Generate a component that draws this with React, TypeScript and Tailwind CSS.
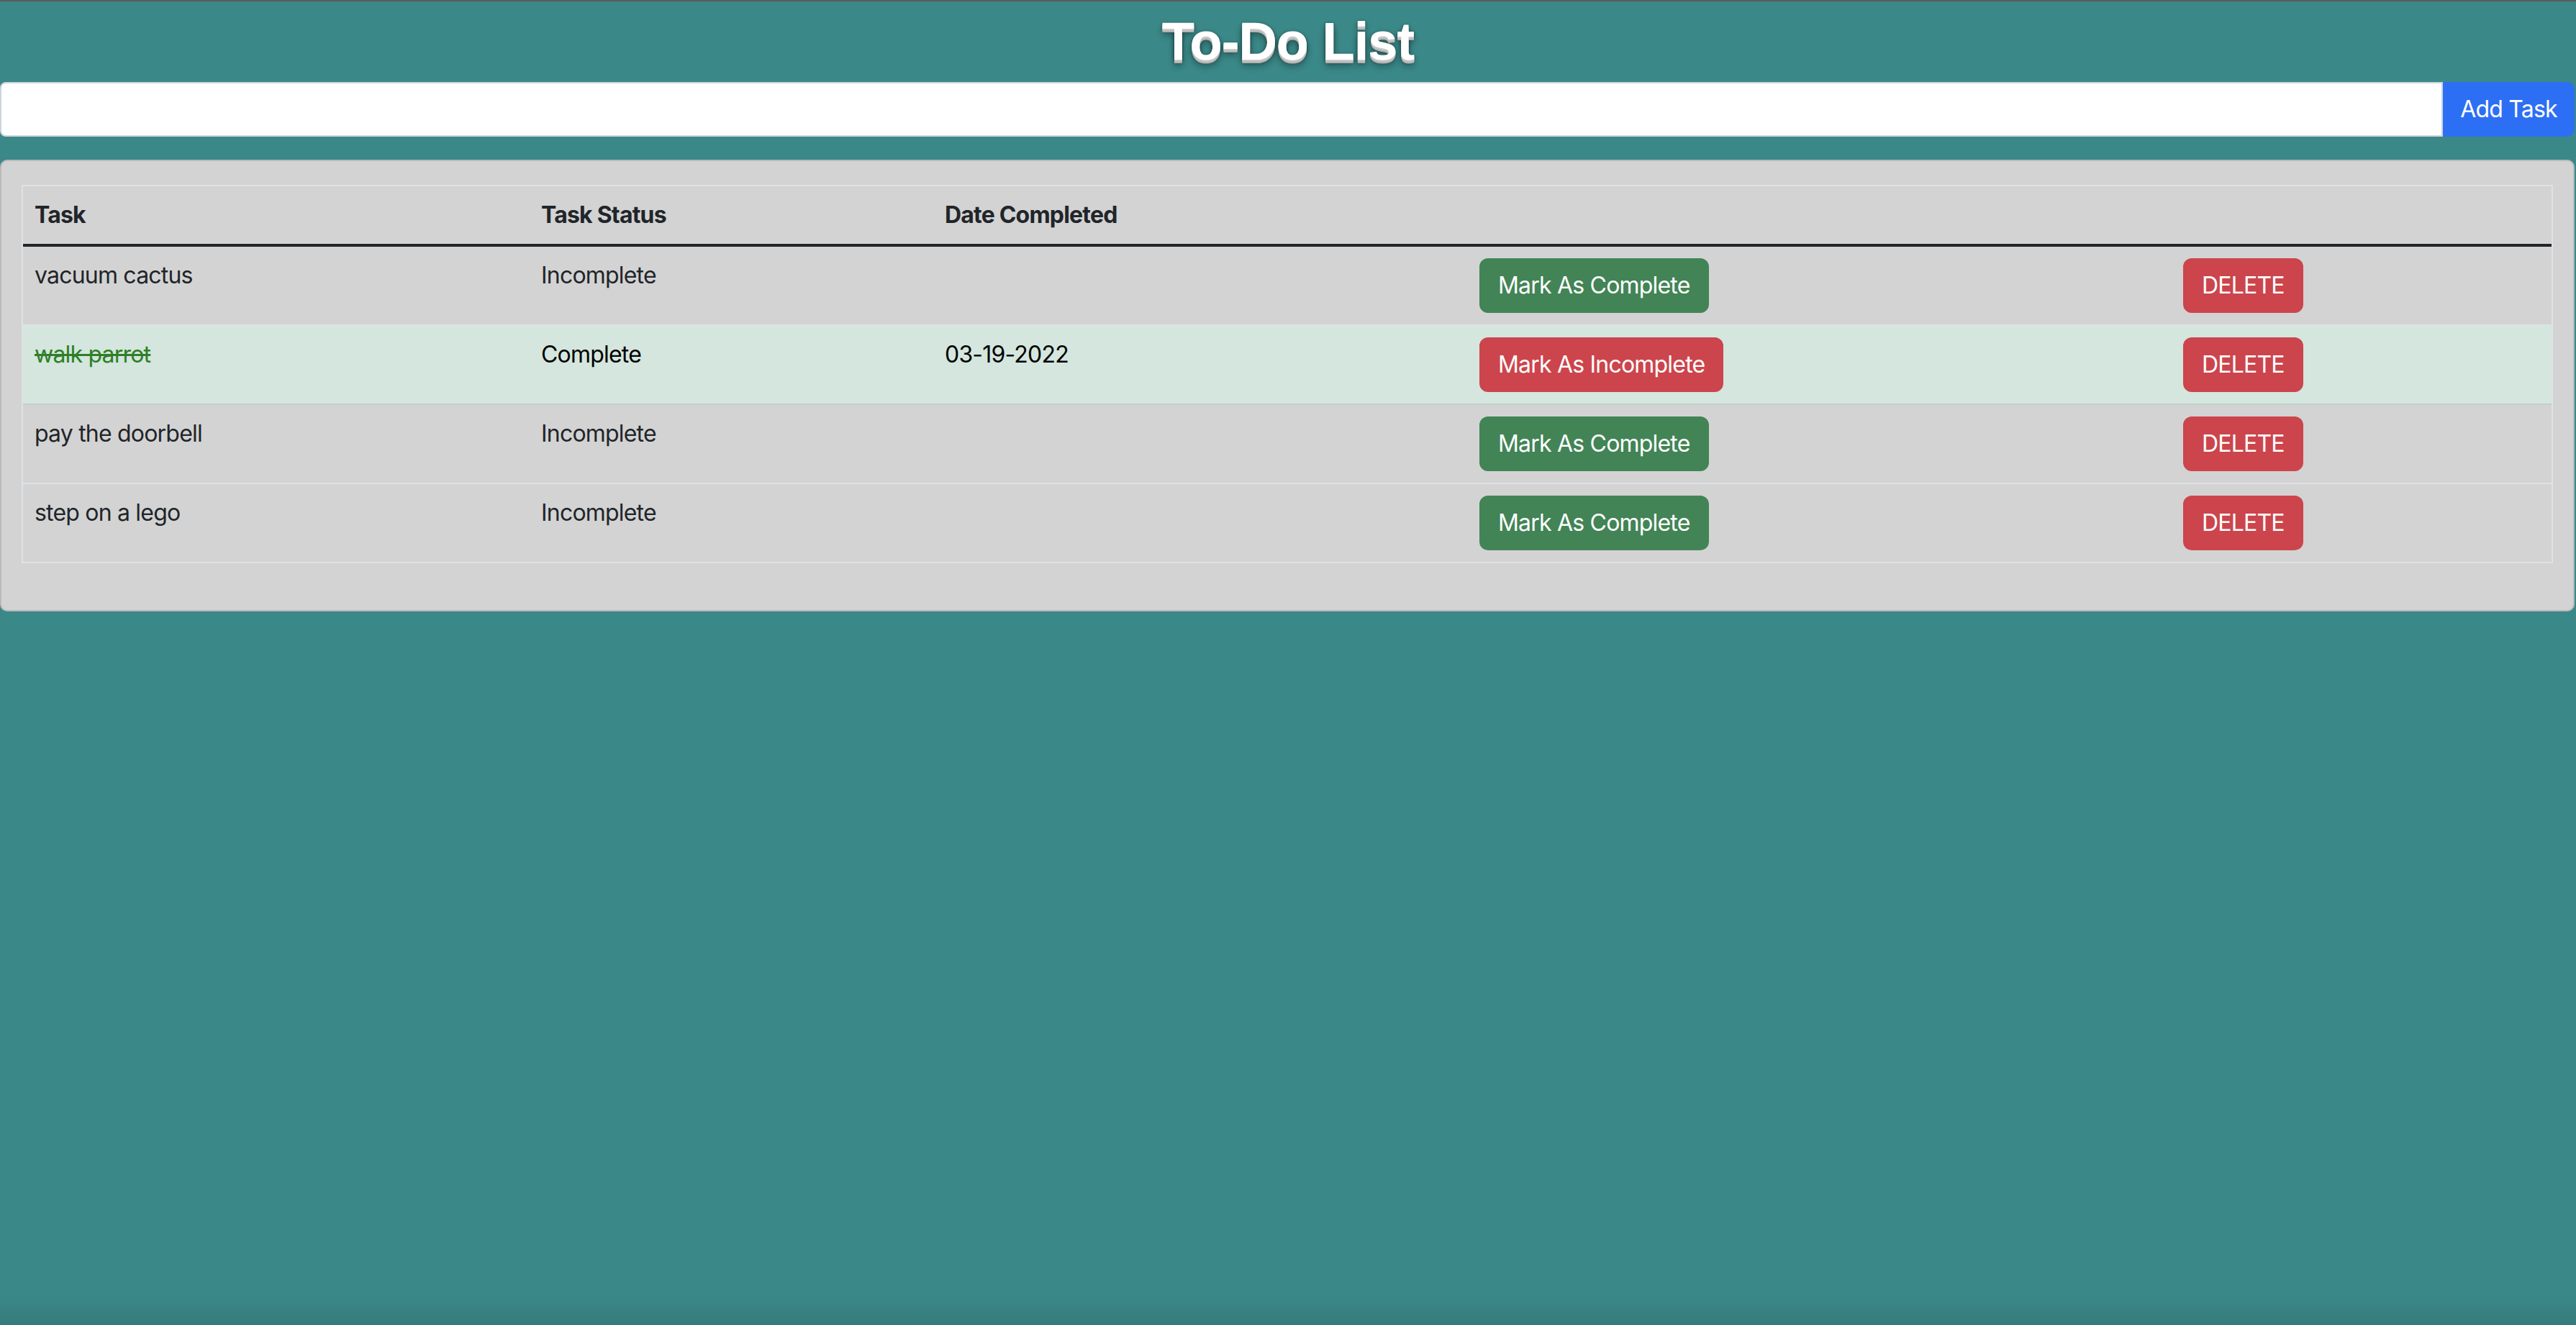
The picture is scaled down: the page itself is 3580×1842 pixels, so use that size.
import { useState } from 'react';

type Task = {
  id: number;
  name: string;
  done: boolean;
  date: string;
};

const initialTasks: Task[] = [
  { id: 1, name: 'vacuum cactus', done: false, date: '' },
  { id: 2, name: 'walk parrot', done: true, date: '03-19-2022' },
  { id: 3, name: 'pay the doorbell', done: false, date: '' },
  { id: 4, name: 'step on a lego', done: false, date: '' },
];

const today = () => {
  const d = new Date();
  const mm = String(d.getMonth() + 1).padStart(2, '0');
  const dd = String(d.getDate()).padStart(2, '0');
  return `${mm}-${dd}-${d.getFullYear()}`;
};

const gridCols = 'grid grid-cols-[704px_561px_743px_978px_1fr]';

export default function App() {
  const [tasks, setTasks] = useState<Task[]>(initialTasks);
  const [text, setText] = useState('');

  const addTask = (e: React.FormEvent) => {
    e.preventDefault();
    if (!text.trim()) return;
    setTasks([...tasks, { id: Date.now(), name: text.trim(), done: false, date: '' }]);
    setText('');
  };

  const toggleTask = (id: number) => {
    setTasks(tasks.map(t =>
      t.id === id ? { ...t, done: !t.done, date: t.done ? '' : today() } : t
    ));
  };

  const deleteTask = (id: number) => {
    setTasks(prev => prev.filter(t => t.id !== id));
  };

  return (
    <div className="min-h-screen flex flex-col bg-[#3b8888] font-['Inter',sans-serif] tracking-[-0.8px] text-[#212529]">
      <div className="h-[2px] bg-[#5b5b5b]" />

      <h1 className="h-[112px] flex items-center justify-center font-['Liberation_Sans',Arial,sans-serif] font-bold text-[74px] tracking-[-1px] leading-none text-white [text-shadow:0_1px_0_#ccc,0_2px_0_#c9c9c9,0_3px_0_#bbb,0_4px_0_#b9b9b9,0_5px_0_#aaa,0_6px_1px_rgba(0,0,0,.1),0_0_5px_rgba(0,0,0,.1),0_1px_3px_rgba(0,0,0,.3),0_3px_5px_rgba(0,0,0,.2),0_5px_10px_rgba(0,0,0,.25),0_10px_10px_rgba(0,0,0,.2)]">
        To-Do List
      </h1>

      <form onSubmit={addTask} className="flex h-[76px] mr-[2px]">
        <input
          value={text}
          onChange={e => setText(e.target.value)}
          className="flex-1 min-w-0 bg-white border-2 border-[#ced4da] rounded-l-[8px] px-[24px] text-[32px] outline-none"
        />
        <button
          type="submit"
          className="w-[183px] bg-[#2d6ff4] text-white text-[32px] leading-[48px] rounded-r-[10px]"
        >
          Add Task
        </button>
      </form>

      <div className="mt-[32px] mr-[2px] bg-[#d3d3d3] border-2 border-[#bababa] rounded-[10px] px-[28px] pt-[33px] pb-[65px]">
        <div className="border-2 border-[#dee2e6] text-[32px] leading-[48px]">
          <div className={`${gridCols} border-b-4 border-[#212529] font-bold`}>
            <div className="p-[16px]">Task</div>
            <div className="p-[16px]">Task Status</div>
            <div className="p-[16px]">Date Completed</div>
            <div className="p-[16px]" />
            <div className="p-[16px]" />
          </div>

          {tasks.map((task, i) => (
            <div
              key={task.id}
              className={`${gridCols} ${i < tasks.length - 1 ? 'border-b-2' : ''} ${
                task.done ? 'bg-[#d4e6de] border-[#bfd1c9] text-black' : 'border-[#dee2e6]'
              }`}
            >
              <div className="p-[16px]">
                <span className={task.done ? 'text-[#2f7f27] line-through' : ''}>{task.name}</span>
              </div>
              <div className="p-[16px]">{task.done ? 'Complete' : 'Incomplete'}</div>
              <div className="p-[16px]">{task.date}</div>
              <div className="p-[16px]">
                <button
                  onClick={() => toggleTask(task.id)}
                  className={`px-[24px] py-[12px] border-2 rounded-[12px] text-white ${
                    task.done ? 'bg-[#cc454c] border-[#cc454c]' : 'bg-[#428456] border-[#428456]'
                  }`}
                >
                  {task.done ? 'Mark As Incomplete' : 'Mark As Complete'}
                </button>
              </div>
              <div className="p-[16px]">
                <button
                  onClick={() => deleteTask(task.id)}
                  className="px-[24px] py-[12px] border-2 border-[#cc454c] rounded-[12px] bg-[#cc454c] text-white"
                >
                  DELETE
                </button>
              </div>
            </div>
          ))}
        </div>
      </div>

      <div className="flex-1" />
      <div className="h-[40px] bg-gradient-to-b from-transparent to-black/10" />
    </div>
  );
}
